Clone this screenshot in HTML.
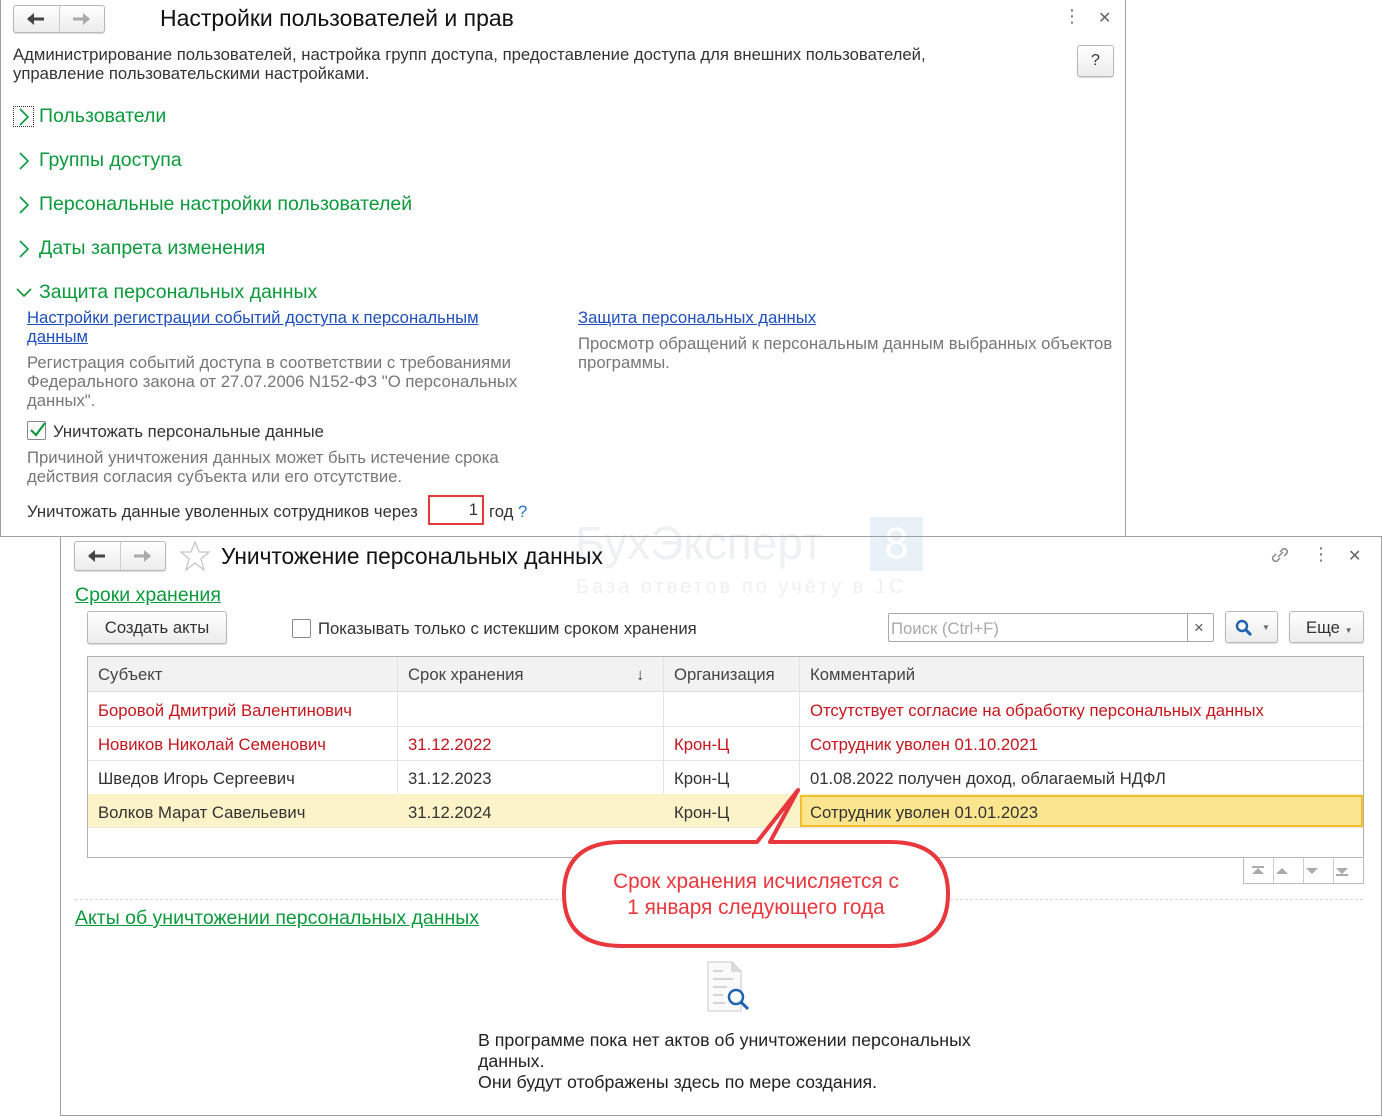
<!DOCTYPE html>
<html><head><meta charset="utf-8"><style>
*{box-sizing:border-box;margin:0;padding:0}
body{width:1382px;height:1116px;background:#fff;position:relative;overflow:hidden;font-family:"Liberation Sans","DejaVu Sans",sans-serif;color:#333;font-size:16.7px}
.a{position:absolute;white-space:nowrap}
.g{color:#0a9a3c}
.h{font-size:19.5px}
.lnk{color:#1f4fbf;text-decoration:underline}
.gr{color:#777}
.btn{position:absolute;border:1px solid #b8b8b8;border-radius:3px;background:linear-gradient(#fff,#ececec);box-shadow:0 1px 1px rgba(0,0,0,.15)}
.red{color:#c4161c}
</style></head><body>
<!-- top window -->
<div class="a" style="left:0;top:0;width:1126px;height:537px;border:1px solid #a0a0a0;border-top:none"></div>
<div class="btn" style="left:13px;top:5px;width:92px;height:28px"></div>
<div class="a" style="left:59px;top:6px;width:1px;height:26px;background:#ccc"></div>
<svg class="a" style="left:26px;top:11px" width="20" height="16"><path d="M2 8h16" stroke="#444" stroke-width="3"/><path d="M1 8l7-6v12z" fill="#444"/></svg>
<svg class="a" style="left:71px;top:11px" width="20" height="16"><path d="M2 8h16" stroke="#aaa" stroke-width="3"/><path d="M19 8l-7-6v12z" fill="#aaa"/></svg>
<div class="a" style="left:160px;top:5px;font-size:23px;color:#111">Настройки пользователей и прав</div>
<div class="a" style="left:1063px;top:6px;font-size:18px;color:#777">&#8942;</div>
<div class="a" style="left:1098px;top:8px;font-size:16px;color:#666">&#10005;</div>
<div class="a" style="left:13px;top:45px;line-height:19px">Администрирование пользователей, настройка групп доступа, предоставление доступа для внешних пользователей,<br>управление пользовательскими настройками.</div>
<div class="btn" style="left:1077px;top:45px;width:37px;height:32px;text-align:center;line-height:30px;font-size:16px;color:#333">?</div>
<div class="a" style="left:13px;top:106px;width:21px;height:21px;border:1px dotted #333"></div>
<svg class="a" style="left:17px;top:107px" width="14" height="20"><path d="M3 2l8 8-8 8" fill="none" stroke="#0a9a3c" stroke-width="1.6"/></svg>
<div class="a g h" style="left:39px;top:105px">Пользователи</div>
<svg class="a" style="left:17px;top:151px" width="14" height="20"><path d="M3 2l8 8-8 8" fill="none" stroke="#0a9a3c" stroke-width="1.6"/></svg>
<div class="a g h" style="left:39px;top:149px">Группы доступа</div>
<svg class="a" style="left:17px;top:195px" width="14" height="20"><path d="M3 2l8 8-8 8" fill="none" stroke="#0a9a3c" stroke-width="1.6"/></svg>
<div class="a g h" style="left:39px;top:193px">Персональные настройки пользователей</div>
<svg class="a" style="left:17px;top:239px" width="14" height="20"><path d="M3 2l8 8-8 8" fill="none" stroke="#0a9a3c" stroke-width="1.6"/></svg>
<div class="a g h" style="left:39px;top:237px">Даты запрета изменения</div>
<svg class="a" style="left:15px;top:286px" width="18" height="12"><path d="M2 3l7 7 7-7" fill="none" stroke="#0a9a3c" stroke-width="1.6"/></svg>
<div class="a g h" style="left:39px;top:281px">Защита персональных данных</div>
<div class="a lnk" style="left:27px;top:308px;line-height:19px">Настройки регистрации событий доступа к персональным<br>данным</div>
<div class="a gr" style="left:27px;top:353px;line-height:19px">Регистрация событий доступа в соответствии с требованиями<br>Федерального закона от 27.07.2006 N152-ФЗ "О персональных<br>данных".</div>
<div class="a lnk" style="left:578px;top:308px">Защита персональных данных</div>
<div class="a gr" style="left:578px;top:334px;line-height:19px">Просмотр обращений к персональным данным выбранных объектов<br>программы.</div>
<div class="a" style="left:27px;top:421px;width:19px;height:19px;border:1px solid #888;border-radius:2px;background:#fff"></div>
<svg class="a" style="left:28px;top:420px" width="20" height="20"><path d="M3 10l5 5 9-12" fill="none" stroke="#0a9a3c" stroke-width="2.2"/></svg>
<div class="a" style="left:53px;top:422px">Уничтожать персональные данные</div>
<div class="a gr" style="left:27px;top:448px;line-height:19px">Причиной уничтожения данных может быть истечение срока<br>действия согласия субъекта или его отсутствие.</div>
<div class="a" style="left:27px;top:502px">Уничтожать данные уволенных сотрудников через</div>
<div class="a" style="left:428px;top:495px;width:56px;height:30px;border:2px solid #e23b3b;background:#fff;text-align:right;padding-right:4px;line-height:26px">1</div>
<div class="a" style="left:489px;top:502px">год <span style="color:#1e73c8">?</span></div>
<!-- watermark -->
<div class="a" style="left:575px;top:516px;font-size:46px;color:#eef1f4">БухЭксперт</div>
<div class="a" style="left:870px;top:517px;width:53px;height:54px;background:#e8f1f8;color:#fff;font-size:44px;text-align:center;line-height:54px">8</div>
<div class="a" style="left:576px;top:576px;font-size:20px;color:#eef0f2;letter-spacing:3px">База ответов по учёту в 1С</div>
<!-- bottom window -->
<div class="a" style="left:60px;top:536px;width:1322px;height:580px;border:1px solid #a0a0a0;background:transparent"></div>
<div class="btn" style="left:74px;top:541px;width:92px;height:30px"></div>
<div class="a" style="left:120px;top:542px;width:1px;height:28px;background:#ccc"></div>
<svg class="a" style="left:87px;top:548px" width="20" height="16"><path d="M2 8h16" stroke="#444" stroke-width="3"/><path d="M1 8l7-6v12z" fill="#444"/></svg>
<svg class="a" style="left:132px;top:548px" width="20" height="16"><path d="M2 8h16" stroke="#aaa" stroke-width="3"/><path d="M19 8l-7-6v12z" fill="#aaa"/></svg>
<svg class="a" style="left:179px;top:540px" width="32" height="32"><path d="M16 2l4 10h10l-8 7 3 11-9-7-9 7 3-11-8-7h10z" fill="none" stroke="#c8c8c8" stroke-width="1.3"/></svg>
<div class="a" style="left:221px;top:543px;font-size:22.7px;color:#111">Уничтожение персональных данных</div>
<svg class="a" style="left:1269px;top:544px" width="22" height="22"><path d="M9 13l5-5M7 10l-3 3a3 3 0 004 4l3-3M15 12l3-3a3 3 0 00-4-4l-3 3" fill="none" stroke="#888" stroke-width="1.5"/></svg>
<div class="a" style="left:1312px;top:544px;font-size:18px;color:#777">&#8942;</div>
<div class="a" style="left:1348px;top:546px;font-size:16px;color:#666">&#10005;</div>
<div class="a g h" style="left:75px;top:584px;text-decoration:underline">Сроки хранения</div>
<div class="btn" style="left:87px;top:611px;width:140px;height:33px;text-align:center;line-height:31px;color:#333">Создать акты</div>
<div class="a" style="left:292px;top:619px;width:19px;height:19px;border:1px solid #888;border-radius:2px"></div>
<div class="a" style="left:318px;top:619px">Показывать только с истекшим сроком хранения</div>
<div class="a" style="left:888px;top:613px;width:326px;height:29px;border:1px solid #aaa;border-radius:2px"></div>
<div class="a" style="left:1187px;top:614px;width:1px;height:27px;background:#aaa"></div>
<div class="a" style="left:891px;top:619px;color:#aaa">Поиск (Ctrl+F)</div>
<div class="a" style="left:1194px;top:618px;color:#555">×</div>
<div class="btn" style="left:1225px;top:611px;width:53px;height:32px"></div>
<svg class="a" style="left:1235px;top:619px" width="18" height="18"><circle cx="7" cy="7" r="5" fill="none" stroke="#1e62b0" stroke-width="2.4"/><path d="M11 11l5 5" stroke="#1e62b0" stroke-width="3"/></svg>
<div class="a" style="left:1262px;top:623px;font-size:8px;color:#666">▼</div>
<div class="btn" style="left:1289px;top:611px;width:75px;height:32px"></div>
<div class="a" style="left:1306px;top:618px;color:#333">Еще <span style="font-size:8px;color:#666">▼</span></div>
<!-- table -->
<div class="a" style="left:87px;top:656px;width:1277px;height:202px;border:1px solid #b0b0b0"></div>
<div class="a" style="left:88px;top:657px;width:1275px;height:35px;background:#f2f2f2;border-bottom:1px solid #ddd"></div>
<div class="a" style="left:397px;top:657px;width:1px;height:170px;background:#e2e2e2"></div>
<div class="a" style="left:663px;top:657px;width:1px;height:170px;background:#e2e2e2"></div>
<div class="a" style="left:799px;top:657px;width:1px;height:170px;background:#e2e2e2"></div>
<div class="a" style="left:98px;top:665px;color:#444">Субъект</div>
<div class="a" style="left:408px;top:665px;color:#444">Срок хранения</div>
<div class="a" style="left:636px;top:665px;color:#444">↓</div>
<div class="a" style="left:674px;top:665px;color:#444">Организация</div>
<div class="a" style="left:810px;top:665px;color:#444">Комментарий</div>
<div class="a" style="left:88px;top:726px;width:1275px;height:1px;background:#e6e6e6"></div>
<div class="a" style="left:88px;top:760px;width:1275px;height:1px;background:#e6e6e6"></div>
<div class="a" style="left:88px;top:794px;width:1275px;height:34px;background:#fdf3c8;border-bottom:1px solid #e6e6e6"></div>
<div class="a" style="left:800px;top:795px;width:563px;height:32px;background:#fbe58f;border:2px solid #f2c12e"></div>
<div class="a red" style="left:98px;top:701px">Боровой Дмитрий Валентинович</div>
<div class="a red" style="left:810px;top:701px">Отсутствует согласие на обработку персональных данных</div>
<div class="a red" style="left:98px;top:735px">Новиков Николай Семенович</div>
<div class="a red" style="left:408px;top:735px">31.12.2022</div>
<div class="a red" style="left:674px;top:735px">Крон-Ц</div>
<div class="a red" style="left:810px;top:735px">Сотрудник уволен 01.10.2021</div>
<div class="a" style="left:98px;top:769px">Шведов Игорь Сергеевич</div>
<div class="a" style="left:408px;top:769px">31.12.2023</div>
<div class="a" style="left:674px;top:769px">Крон-Ц</div>
<div class="a" style="left:810px;top:769px">01.08.2022 получен доход, облагаемый НДФЛ</div>
<div class="a" style="left:98px;top:803px">Волков Марат Савельевич</div>
<div class="a" style="left:408px;top:803px">31.12.2024</div>
<div class="a" style="left:674px;top:803px">Крон-Ц</div>
<div class="a" style="left:810px;top:803px">Сотрудник уволен 01.01.2023</div>
<div class="a" style="left:1243px;top:857px;width:121px;height:27px;border:1px solid #bbb;background:#fff"></div>
<div class="a" style="left:1273px;top:858px;width:1px;height:25px;background:#ccc"></div>
<div class="a" style="left:1303px;top:858px;width:1px;height:25px;background:#ccc"></div>
<div class="a" style="left:1333px;top:858px;width:1px;height:25px;background:#ccc"></div>
<svg class="a" style="left:1250px;top:864px" width="110" height="14"><g fill="#aaa"><path d="M2 2h12v2H2zM8 4l-6 6h12z"/><path d="M32 4l-6 6h12z"/><path d="M56 4l6 6 6-6z"/><path d="M86 4l6 6 6-6zM86 10h12v2H86z"/></g></svg>
<div class="a" style="left:75px;top:899px;width:1288px;border-top:1px dashed #d6d6d6"></div>
<div class="a g h" style="left:75px;top:907px;text-decoration:underline">Акты об уничтожении персональных данных</div>
<svg class="a" style="left:706px;top:961px" width="46" height="52"><path d="M2 1h24l9 9v40H2z" fill="#fafafa" stroke="#c8c8c8"/><path d="M26 1v9h9" fill="#ddd" stroke="#c8c8c8"/><path d="M7 10h10M7 18h20M7 26h14M7 34h10M7 42h12" stroke="#c8c8c8" stroke-width="1.5"/><circle cx="30" cy="36" r="7" fill="#fff" stroke="#1e62b0" stroke-width="2.5"/><path d="M35 41l7 7" stroke="#1e62b0" stroke-width="3"/></svg>
<div class="a" style="left:478px;top:1030px;line-height:21px;color:#222;font-size:17.8px">В программе пока нет актов об уничтожении персональных<br>данных.<br>Они будут отображены здесь по мере создания.</div>
<!-- bubble -->
<svg class="a" style="left:0;top:0" width="1382" height="1116"><path d="M665 842 L757 842 L798 790 L770 842 L890 842 Q948 842 948 894 Q948 946 890 946 L622 946 Q564 946 564 894 Q564 842 622 842 Z" fill="#fff" stroke="#e8373d" stroke-width="4" stroke-linejoin="round"/></svg>
<div class="a" style="left:564px;top:869px;width:384px;text-align:center;color:#e8373d;font-size:20.8px;line-height:26px;white-space:normal">Срок хранения исчисляется с<br>1 января следующего года</div>
</body></html>
